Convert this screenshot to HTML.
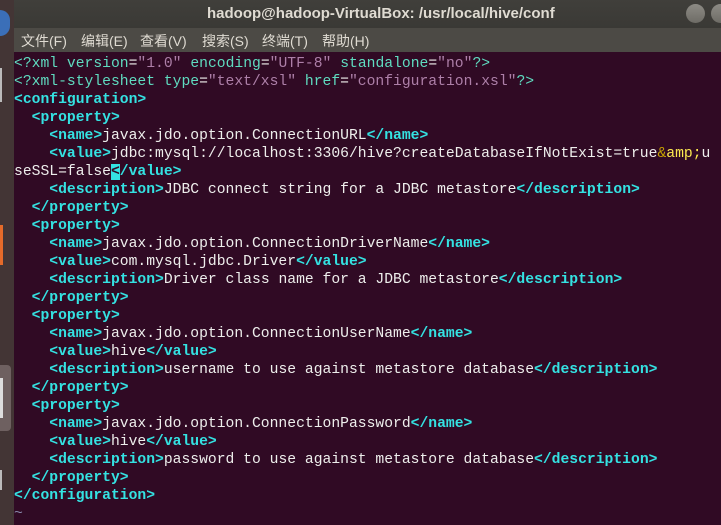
<!DOCTYPE html>
<html><head><meta charset="utf-8"><style>
html,body{margin:0;padding:0;width:721px;height:525px;overflow:hidden;background:#300a24;}
#launch{position:absolute;left:0;top:0;width:14px;height:525px;background:#433535;}
#title{position:absolute;left:14px;top:0;width:707px;height:28px;background:linear-gradient(#403f3b,#3a3935);color:#dfdbd2;font:bold 15px "Liberation Sans",sans-serif;}
#title span{position:absolute;left:193px;top:5px;}
#menu{position:absolute;left:14px;top:28px;width:707px;height:24px;background:#4c4a45;color:#dfdbd2;font:14px "Liberation Sans","Noto Sans CJK SC",sans-serif;}
#menu span{position:absolute;top:3px;}
#term{position:absolute;left:14px;top:55px;width:707px;font:14.7px/18px "Liberation Mono",monospace;color:#eeeeec;white-space:pre;}
.t{color:#34e2e2;font-weight:bold}
.p{color:#5fdcc0}
.s{color:#ad7fa8}
.y{color:#fce94f}
.a{color:#c4a000}
.cur{background:#34e2e2;color:#300a24}
.btn{position:absolute;top:4px;width:19px;height:19px;border-radius:50%;background:linear-gradient(#8d8b85,#6e6c66);}
</style></head><body>
<div id="launch">
<div style="position:absolute;left:0;top:10px;width:10px;height:26px;background:#3b6fb8;border-radius:0 12px 12px 0"></div>
<div style="position:absolute;left:0;top:68px;width:2px;height:34px;background:#bbb"></div>
<div style="position:absolute;left:0;top:225px;width:3px;height:40px;background:#e46a2a"></div>
<div style="position:absolute;left:0;top:365px;width:11px;height:66px;background:#6e6060;border-radius:0 4px 4px 0"></div>
<div style="position:absolute;left:0;top:378px;width:3px;height:40px;background:#ddd"></div>
<div style="position:absolute;left:0;top:470px;width:2px;height:20px;background:#bbb"></div>
</div>
<div id="title"><span>hadoop@hadoop-VirtualBox: /usr/local/hive/conf</span>
<div class="btn" style="left:672px"></div><div class="btn" style="left:697px"></div></div>
<div id="menu"><span style="left:7px">文件(F)</span><span style="left:67px">编辑(E)</span><span style="left:126px">查看(V)</span><span style="left:188px">搜索(S)</span><span style="left:248px">终端(T)</span><span style="left:308px">帮助(H)</span></div>
<div id="term"><span class="p">&lt;?xml version</span>=<span class="s">"1.0"</span> <span class="p">encoding</span>=<span class="s">"UTF-8"</span> <span class="p">standalone</span>=<span class="s">"no"</span><span class="p">?&gt;</span>
<span class="p">&lt;?xml-stylesheet type</span>=<span class="s">"text/xsl"</span> <span class="p">href</span>=<span class="s">"configuration.xsl"</span><span class="p">?&gt;</span>
<span class="t">&lt;configuration&gt;</span>
  <span class="t">&lt;property&gt;</span>
    <span class="t">&lt;name&gt;</span>javax.jdo.option.ConnectionURL<span class="t">&lt;/name&gt;</span>
    <span class="t">&lt;value&gt;</span>jdbc:mysql://localhost:3306/hive?createDatabaseIfNotExist=true<span class="a">&amp;</span><span class="y">amp;</span>u
seSSL=false<span class="t"><span class="cur">&lt;</span>/value&gt;</span>
    <span class="t">&lt;description&gt;</span>JDBC connect string for a JDBC metastore<span class="t">&lt;/description&gt;</span>
  <span class="t">&lt;/property&gt;</span>
  <span class="t">&lt;property&gt;</span>
    <span class="t">&lt;name&gt;</span>javax.jdo.option.ConnectionDriverName<span class="t">&lt;/name&gt;</span>
    <span class="t">&lt;value&gt;</span>com.mysql.jdbc.Driver<span class="t">&lt;/value&gt;</span>
    <span class="t">&lt;description&gt;</span>Driver class name for a JDBC metastore<span class="t">&lt;/description&gt;</span>
  <span class="t">&lt;/property&gt;</span>
  <span class="t">&lt;property&gt;</span>
    <span class="t">&lt;name&gt;</span>javax.jdo.option.ConnectionUserName<span class="t">&lt;/name&gt;</span>
    <span class="t">&lt;value&gt;</span>hive<span class="t">&lt;/value&gt;</span>
    <span class="t">&lt;description&gt;</span>username to use against metastore database<span class="t">&lt;/description&gt;</span>
  <span class="t">&lt;/property&gt;</span>
  <span class="t">&lt;property&gt;</span>
    <span class="t">&lt;name&gt;</span>javax.jdo.option.ConnectionPassword<span class="t">&lt;/name&gt;</span>
    <span class="t">&lt;value&gt;</span>hive<span class="t">&lt;/value&gt;</span>
    <span class="t">&lt;description&gt;</span>password to use against metastore database<span class="t">&lt;/description&gt;</span>
  <span class="t">&lt;/property&gt;</span>
<span class="t">&lt;/configuration&gt;</span>
<span style="color:#8888aa">~</span></div>
</body></html>
